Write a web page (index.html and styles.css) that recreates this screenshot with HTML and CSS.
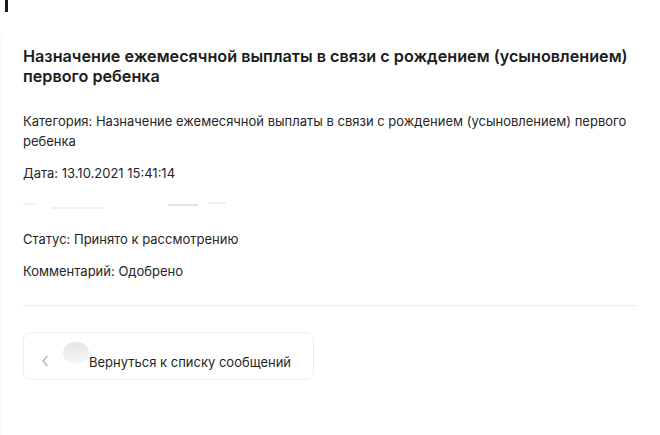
FILE: index.html
```html
<!DOCTYPE html>
<html lang="ru">
<head>
    <meta charset="UTF-8">
    <meta name="viewport" content="width=device-width, initial-scale=1.0">
    <title>Сообщение</title>
    <link rel="stylesheet" href="styles.css">
</head>
<body>
    <div class="top-mark"></div>

    <!-- Message details -->
    <div class="message-page">
        <h1 class="message-title">Назначение ежемесячной выплаты в связи с рождением (усыновлением) первого ребенка</h1>

        <p class="message-row">Категория: Назначение ежемесячной выплаты в связи с рождением (усыновлением) первого ребенка</p>
        <p class="message-row">Дата: 13.10.2021 15:41:14</p>
        <p class="message-row message-faded">
            <span class="smudge smudge-a"></span>
            <span class="smudge smudge-b"></span>
            <span class="smudge smudge-c"></span>
            <span class="smudge smudge-d"></span>
        </p>
        <p class="message-row">Статус: Принято к рассмотрению</p>
        <p class="message-row">Комментарий: Одобрено</p>

        <hr class="divider">

        <button class="back-button">
            <span class="back-arrow">
                <svg width="8" height="12" viewBox="0 0 8 12"><path d="M6 1.5 L2 6 L6 10.5" fill="none" stroke="#b5b5b5" stroke-width="1.3" stroke-linecap="round" stroke-linejoin="round"/></svg>
            </span>
            <span class="back-bubble"></span>
            <span class="back-text">Вернуться к списку сообщений</span>
        </button>
    </div>
</body>
</html>
```

FILE: styles.css
```css
body {
    font-family: Inter, "Noto Sans", Arial, sans-serif;
    margin: 0;
    background-color: #fff;
    color: #1f1f1f;
    height: 435px;
    overflow: hidden;
}

.top-mark {
    width: 3px;
    height: 12px;
    margin-left: 5px;
    background-color: #1a1a1a;
}

.message-page {
    margin-top: 24px;
    margin-left: 1px;
    padding: 10px 23px 0 21px;
    border-left: 1px solid #f3f3f3;
    height: 400px;
}

.message-title {
    font-size: 16.2px;
    font-weight: 600;
    line-height: 20px;
    margin: 0 0 25px 0;
    color: #1c1c1c;
}

.message-row {
    font-size: 13px;
    line-height: 20px;
    margin: 0 0 12px 0;
    color: #262626;
}

.message-faded {
    height: 22px;
    position: relative;
}

.smudge {
    position: absolute;
    height: 2px;
    background-color: #f0f0f0;
}

.smudge-a { top: 8px; left: 0; width: 12px; }
.smudge-b { top: 12px; left: 28px; width: 52px; }
.smudge-c { top: 9px; left: 145px; width: 30px; background-color: #e2e2e2; }
.smudge-d { top: 7px; left: 185px; width: 18px; }

.divider {
    border: none;
    border-top: 1px solid #ececec;
    margin: 24px 0 26px 0;
}

.back-button {
    display: flex;
    align-items: center;
    width: 291px;
    height: 48px;
    padding: 0 0 0 17px;
    background-color: #fff;
    border: 1px solid #ededed;
    border-radius: 8px;
    font-family: inherit;
    font-size: 13px;
    color: #1f1f1f;
    cursor: pointer;
}

.back-arrow {
    display: flex;
    width: 22px;
    margin-top: 10px;
}

.back-bubble {
    width: 26px;
    height: 22px;
    margin-top: -6px;
    border-radius: 50%;
    background: linear-gradient(#e4e4e4, #f7f7f7);
}

.back-text {
    margin-top: 11px;
}
```
